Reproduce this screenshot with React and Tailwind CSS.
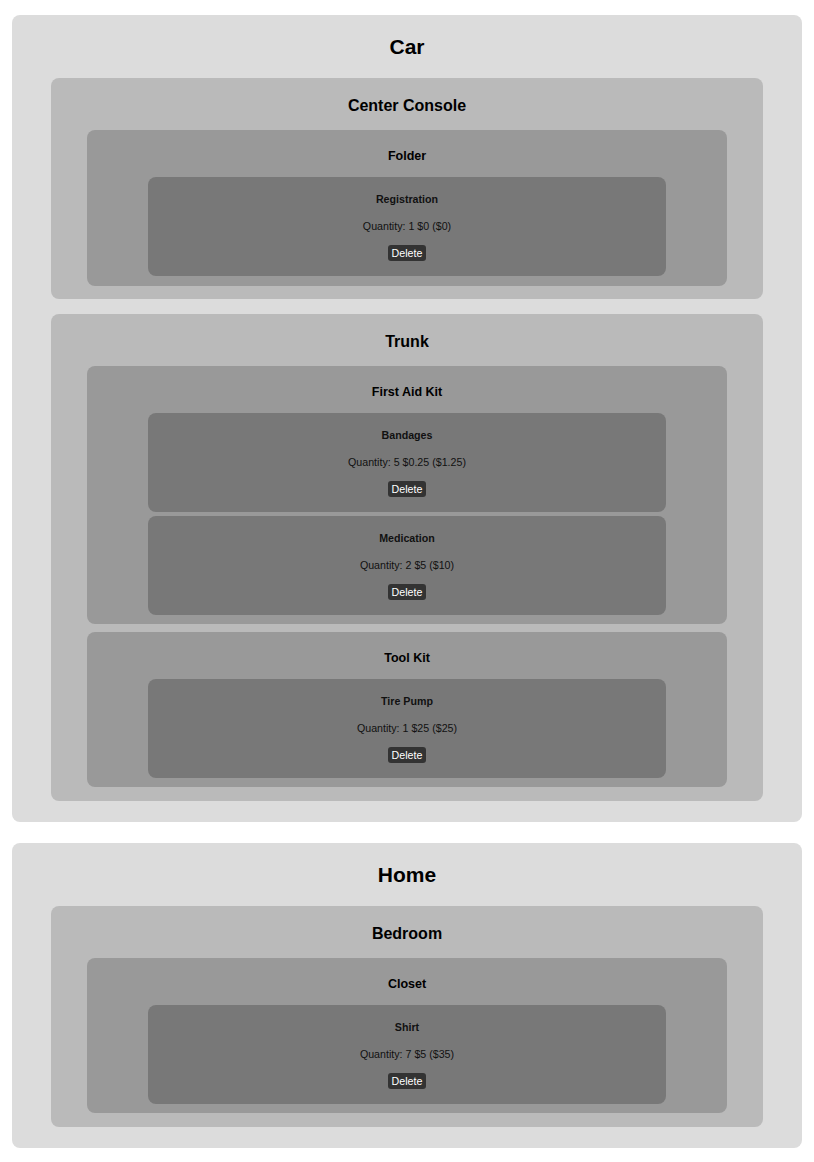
import React from "react";

const data = [
    {
        name: "Car",
        areas: [
            {
                name: "Center Console",
                containers: [
                    { name: "Folder", items: [{ name: "Registration", qty: 1, price: "$0", total: "$0" }] },
                ],
            },
            {
                name: "Trunk",
                containers: [
                    {
                        name: "First Aid Kit",
                        items: [
                            { name: "Bandages", qty: 5, price: "$0.25", total: "$1.25" },
                            { name: "Medication", qty: 2, price: "$5", total: "$10" },
                        ],
                    },
                    { name: "Tool Kit", items: [{ name: "Tire Pump", qty: 1, price: "$25", total: "$25" }] },
                ],
            },
        ],
    },
    {
        name: "Home",
        areas: [
            {
                name: "Bedroom",
                containers: [
                    { name: "Closet", items: [{ name: "Shirt", qty: 7, price: "$5", total: "$35" }] },
                ],
            },
        ],
    },
];

function Item({ item }) {
    return (
        <div className="mx-[61px] flex flex-col items-center rounded-lg bg-[#787878] pt-[15px] pb-[15px] text-[10.67px] text-[#111]">
            <h4 className="font-bold leading-[14px]">{item.name}</h4>
            <p className="mt-[13px] leading-[14px]">
                Quantity: {item.qty} {item.price} ({item.total})
            </p>
            <button className="mt-[12px] h-[16px] rounded-[3px] bg-[#333] px-[4px] leading-[16px] text-white">
                Delete
            </button>
        </div>
    );
}

function Container({ container }) {
    return (
        <div className="mx-[36px] rounded-lg bg-[#999999] pt-[18px] pb-[9.5px]">
            <h3 className="mb-[13px] text-center text-[12.5px] font-bold leading-[16px] text-black">
                {container.name}
            </h3>
            <div className="flex flex-col gap-[4px]">
                {container.items.map((item) => (
                    <Item key={item.name} item={item} />
                ))}
            </div>
        </div>
    );
}

function Area({ area }) {
    return (
        <div className="mx-[39px] rounded-lg bg-[#bababa] pt-[18px] pb-[13.5px]">
            <h2 className="mb-[14px] text-center text-[16px] font-bold leading-[20px] text-black">
                {area.name}
            </h2>
            <div className="flex flex-col gap-[7.5px]">
                {area.containers.map((c) => (
                    <Container key={c.name} container={c} />
                ))}
            </div>
        </div>
    );
}

function Location({ location }) {
    return (
        <div className="rounded-lg bg-[#dcdcdc] pt-[20px] pb-[21px]">
            <h1 className="mb-[19px] text-center text-[21px] font-bold leading-[24px] text-black">
                {location.name}
            </h1>
            <div className="flex flex-col gap-[14.5px]">
                {location.areas.map((a) => (
                    <Area key={a.name} area={a} />
                ))}
            </div>
        </div>
    );
}

export default function App() {
    return (
        <div
            className="flex flex-col gap-[21px] px-[12px] pt-[15px] pb-[15px] bg-white"
            style={{ fontFamily: '"Liberation Sans", Arial, sans-serif' }}
        >
            {data.map((loc) => (
                <Location key={loc.name} location={loc} />
            ))}
        </div>
    );
}
